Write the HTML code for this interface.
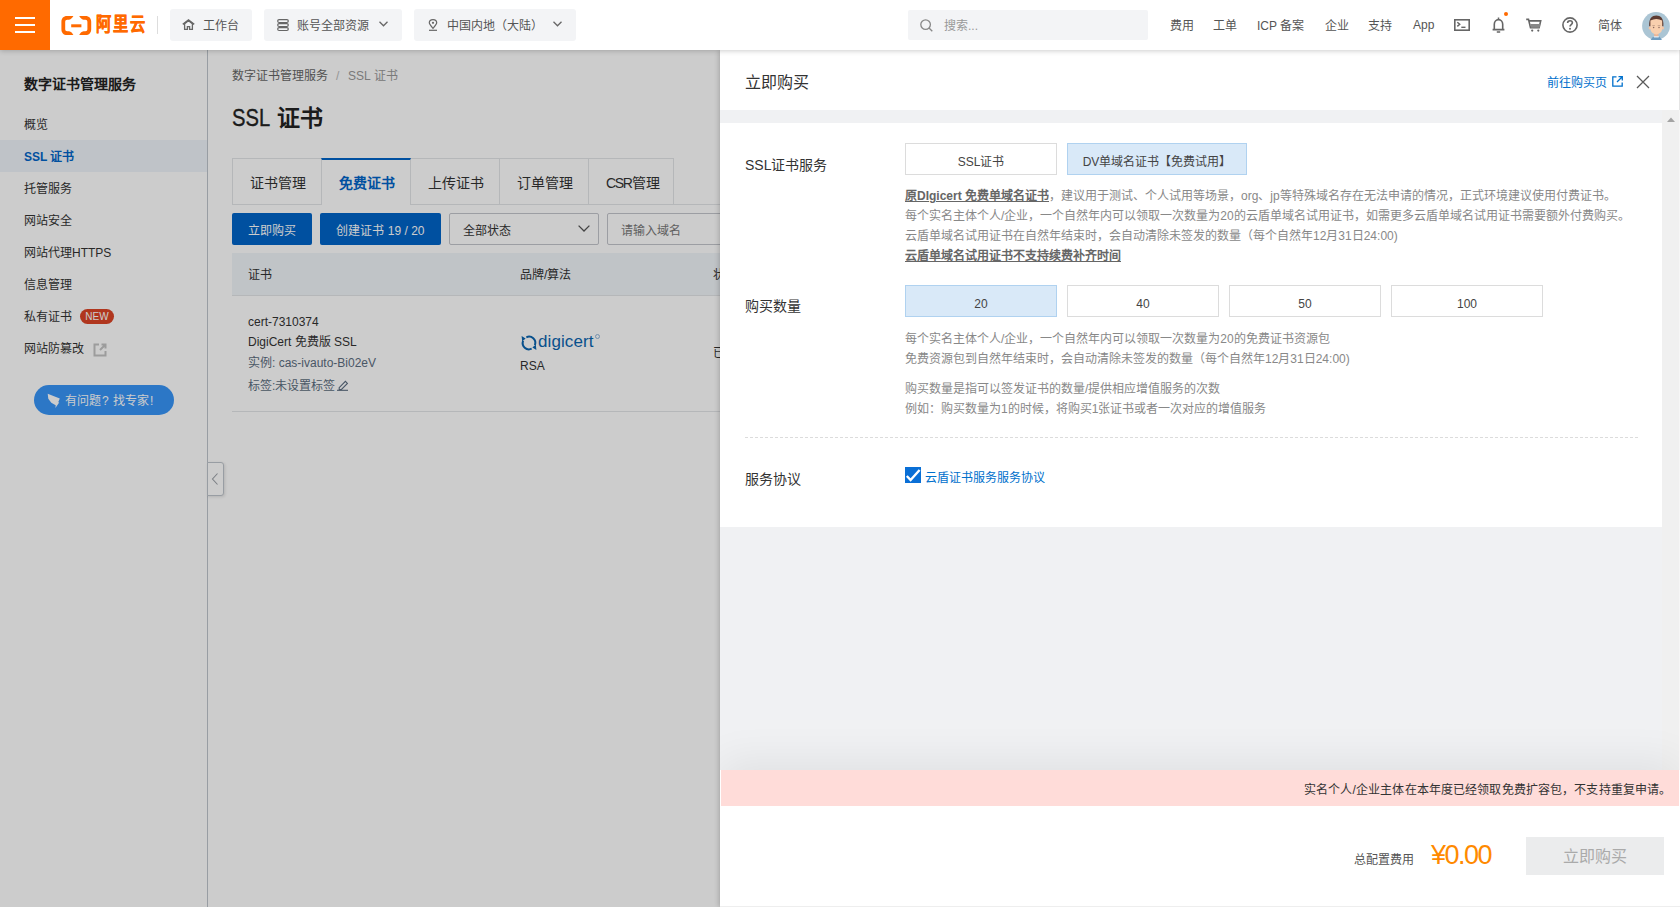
<!DOCTYPE html>
<html lang="zh-CN"><head><meta charset="utf-8">
<style>
*{box-sizing:border-box;margin:0;padding:0}
html,body{width:1680px;height:907px;overflow:hidden;background:#fff}
body{position:relative;font-family:"Liberation Sans",sans-serif;font-size:12px;color:#333}
.a{position:absolute;white-space:nowrap;line-height:14px}
svg{position:absolute;overflow:visible}
/* page under mask */
#side{position:absolute;z-index:0;left:0;top:50px;width:208px;height:857px;background:#fff;border-right:1px solid #bfc5cc}
#main{position:absolute;z-index:0;left:208px;top:50px;width:1472px;height:857px;background:#fff}
#mask{position:absolute;z-index:1;left:0;top:50px;width:1680px;height:857px;background:rgba(0,0,0,.2)}
.si{left:24px;color:#333}
.tab{top:108px;height:47px;border:1px solid #e3e5e8;background:#fff;font-size:14px;line-height:16px;padding:16px 0 0 17px;color:#333}
.tab.act{border-top:2px solid #0064c8;border-bottom:none;color:#0064c8;font-weight:bold;padding-top:15px;height:47px;z-index:1}
.btnp{top:163px;height:32px;border-radius:2px;background:#0064c8;color:#fff;text-align:center;line-height:30px;padding-top:3px}
.sel{top:163px;height:32px;border:1px solid #c4c6cc;border-radius:2px;background:#fff;line-height:26px;padding-top:4px;padding-left:13px;color:#333}
.lbl{left:25px;font-size:14px;line-height:16px;color:#333}
.opt{height:32px;border:1px solid #dcdcdc;background:#fff;text-align:center;line-height:24px;padding-top:6px;color:#444}
.opt.on{background:#d9e9f8;border-color:#b0d2f0}
.desc{left:185px;color:#888;line-height:14px}
.desc b{font-weight:bold;color:#666;text-decoration:underline}
/* nav */
#nav{position:absolute;left:0;top:0;width:1680px;height:50px;background:#fff;box-shadow:0 1px 5px rgba(0,0,0,.2);z-index:5}
.nbtn{position:absolute;top:9px;height:32px;background:#f3f4f6;border-radius:3px}
.nt{color:#555;top:19px}
/* drawer */
#drawer{position:absolute;left:720px;top:50px;width:960px;height:857px;background:#f0f1f3;z-index:3;overflow:hidden;box-shadow:-1px 0 5px rgba(0,0,0,.2)}
</style></head>
<body>
<!-- ================= SIDEBAR ================= -->
<div id="side">
  <div class="a" style="left:24px;top:26px;font-size:14px;font-weight:bold;color:#222;line-height:16px">数字证书管理服务</div>
  <div class="a si" style="top:68px">概览</div>
  <div class="a" style="left:0;top:90px;width:207px;height:32px;background:#eff4fa"></div>
  <div class="a si" style="top:100px;color:#0064c8;font-weight:bold">SSL 证书</div>
  <div class="a si" style="top:132px">托管服务</div>
  <div class="a si" style="top:164px">网站安全</div>
  <div class="a si" style="top:196px">网站代理HTTPS</div>
  <div class="a si" style="top:228px">信息管理</div>
  <div class="a si" style="top:260px">私有证书</div>
  <div class="a" style="left:80px;top:259px;width:34px;height:15px;border-radius:8px;background:#dc4426;color:#fff;font-size:10px;line-height:15px;text-align:center">NEW</div>
  <div class="a si" style="top:292px">网站防篡改</div>
  <svg style="left:93px;top:293px" width="14" height="14" viewBox="0 0 14 14"><path d="M6 1.5H1.5v11h11V8" fill="none" stroke="#c4c4c4" stroke-width="2"/><path d="M7 7l5.5-5.5M8.5 1.5h4v4" fill="none" stroke="#c4c4c4" stroke-width="2"/></svg>
  <div class="a" style="left:34px;top:335px;width:140px;height:30px;border-radius:15px;background:#3895f8"></div>
  <svg style="left:47px;top:343px" width="14" height="16" viewBox="0 0 14 16"><path d="M.7.7L12.8 5.4 11.2 9.3 12.2 9.6 8.4 15 8.7 12.2 4.3 9.8 1.3 5.8z" fill="#fff"/></svg>
  <div class="a" style="left:65px;top:344px;color:#fff">有问题<span style="display:inline-block;width:12px;padding-left:1px">?</span>找专家<span style="padding-left:1px">!</span></div>
</div>
<!-- ================= MAIN ================= -->
<div id="main">
  <div class="a" style="left:24px;top:19px;color:#666">数字证书管理服务</div>
  <div class="a" style="left:128px;top:19px;color:#bbb">/</div>
  <div class="a" style="left:140px;top:19px;color:#999">SSL 证书</div>
  <div class="a" style="left:24px;top:54px;font-size:23px;line-height:28px;font-weight:bold;color:#222"><span style="display:inline-block;transform:scaleX(.84);transform-origin:0 0;font-size:24px;font-weight:normal;-webkit-text-stroke:.35px #222;margin-right:-7px">SSL</span> 证书</div>
  <!-- tabs -->
  <div class="a" style="left:24px;top:154px;width:1300px;height:1px;background:#e3e5e8"></div>
  <div class="a tab" style="left:24px;width:90px">证书管理</div>
  <div class="a tab act" style="left:113px;width:90px">免费证书</div>
  <div class="a tab" style="left:202px;width:90px">上传证书</div>
  <div class="a tab" style="left:291px;width:90px">订单管理</div>
  <div class="a tab" style="left:380px;width:86px"><span style="letter-spacing:-1.4px">CSR</span><span style="margin-left:1px">管理</span></div>
  <!-- toolbar -->
  <div class="a btnp" style="left:24px;width:80px">立即购买</div>
  <div class="a btnp" style="left:112px;width:121px">创建证书 19 / 20</div>
  <div class="a sel" style="left:241px;width:150px">全部状态</div>
  <svg style="left:370px;top:175px" width="12" height="7" viewBox="0 0 12 7"><path d="M.6.6l5.4 5.4L11.4.6" fill="none" stroke="#555" stroke-width="1.3"/></svg>
  <div class="a sel" style="left:399px;width:300px;color:#777">请输入域名</div>
  <!-- table -->
  <div class="a" style="left:24px;top:203px;width:1300px;height:43px;background:#f1f5f9;border-bottom:1px solid #e3e5e8"></div>
  <div class="a" style="left:40px;top:218px">证书</div>
  <div class="a" style="left:312px;top:218px">品牌/算法</div>
  <div class="a" style="left:505px;top:218px">状态</div>
  <div class="a" style="left:40px;top:265px">cert-7310374</div>
  <div class="a" style="left:40px;top:285px">DigiCert 免费版 SSL</div>
  <div class="a" style="left:40px;top:306px;color:#5c6d80">实例: cas-ivauto-Bi02eV</div>
  <div class="a" style="left:40px;top:329px;color:#5c6d80">标签:未设置标签</div>
  <svg style="left:129px;top:328px" width="12" height="13" viewBox="0 0 12 13"><path d="M2.2 9.6L8.4 3.4l2 2-6.2 6.2H2.2z" fill="none" stroke="#5c6d80" stroke-width="1.1"/><path d="M0 12.3h11" stroke="#5c6d80" stroke-width="1.1"/></svg>
  <svg style="left:313px;top:285px" width="16" height="16" viewBox="0 0 16 16"><path d="M5.34 2.29A6.3 6.3 0 0 1 13.92 10.15M10.66 13.71A6.3 6.3 0 0 1 2.08 5.85" fill="none" stroke="#0a64b0" stroke-width="2"/><path d="M1.2 6.5L.6 1 4.6 3.6z M14.8 9.5l.6 5.5-4-2.6z" fill="#0a64b0"/></svg>
  <div class="a" style="left:330px;top:281px;font-size:17px;line-height:22px;color:#0a65b0;letter-spacing:.1px">digicert</div>
  <svg style="left:387px;top:284px" width="5" height="5" viewBox="0 0 5 5"><circle cx="2.5" cy="2.5" r="2" fill="none" stroke="#7aa6cf" stroke-width=".8"/></svg>
  <div class="a" style="left:312px;top:309px">RSA</div>
  <div class="a" style="left:505px;top:296px">已</div>
  <div class="a" style="left:24px;top:361px;width:1300px;height:1px;background:#e3e5e8"></div>
</div>
<div class="a" style="left:207px;top:462px;width:17px;height:34px;background:#fff;border:1px solid #bfc5cc;border-radius:0 3px 3px 0;box-shadow:1px 1px 3px rgba(0,0,0,.12)"></div>
<svg style="left:211px;top:472px" width="8" height="14" viewBox="0 0 8 14"><path d="M6.5 1.5L1.5 7l5 5.5" fill="none" stroke="#9ca1a8" stroke-width="1.1"/></svg>
<div id="mask"></div>

<!-- ================= NAV ================= -->
<div id="nav">
  <div class="a" style="left:0;top:0;width:50px;height:50px;background:#ff6a00"></div>
  <div class="a" style="left:15px;top:17px;width:20px;height:2px;background:#fff"></div>
  <div class="a" style="left:15px;top:24px;width:20px;height:2px;background:#fff"></div>
  <div class="a" style="left:15px;top:31px;width:20px;height:2px;background:#fff"></div>
  <svg style="left:61px;top:15.5px" width="31" height="19" viewBox="0 0 31 19"><path d="M12.4 0H6C2.5 0 .4 2.3.4 5.8v7.4C.4 16.7 2.5 19 6 19h6.4c-1-1.8-2.2-3.2-4.4-3.7H6.3c-1.4 0-2.1-.8-2.1-2.2V5.9c0-1.4.7-2.2 2.1-2.2H8C10.2 3.2 11.4 1.8 12.4 0z" fill="#ff6a00"/><path d="M18.2 0h6.4c3.5 0 5.6 2.3 5.6 5.8v7.4c0 3.5-2.1 5.8-5.6 5.8h-6.4c1-1.8 2.2-3.2 4.4-3.7h1.7c1.4 0 2.1-.8 2.1-2.2V5.9c0-1.4-.7-2.2-2.1-2.2h-1.7C20.4 3.2 19.2 1.8 18.2 0z" fill="#ff6a00"/><rect x="10.2" y="8.3" width="10.2" height="3" fill="#ff6a00"/></svg>
  <div class="a" style="left:96px;top:13px;font-size:19px;line-height:24px;font-weight:bold;color:#ff6a00;letter-spacing:2px;-webkit-text-stroke:.5px #ff6a00;transform:scaleX(.8);transform-origin:0 0">阿里云</div>
  <div class="a" style="left:157px;top:16px;width:1px;height:18px;background:#ddd"></div>

  <div class="nbtn" style="left:170px;width:82px"></div>
  <svg style="left:182px;top:19px" width="13" height="11" viewBox="0 0 13 11"><path d="M.8 5.4L6.5.9l5.7 4.5" fill="none" stroke="#666" stroke-width="1.5"/><path d="M2.6 4.6v5.8h2.8V7.6h2.2v2.8h2.8V4.6L6.5 1.8z" fill="none" stroke="#666" stroke-width="1.3"/></svg>
  <div class="a nt" style="left:203px">工作台</div>

  <div class="nbtn" style="left:264px;width:138px"></div>
  <svg style="left:277px;top:19px" width="12" height="12" viewBox="0 0 12 12"><rect x=".7" y=".6" width="10.6" height="2.9" rx="1.4" fill="none" stroke="#666" stroke-width="1.2"/><rect x=".7" y="4.6" width="10.6" height="2.9" rx="1.4" fill="none" stroke="#666" stroke-width="1.2"/><rect x=".7" y="8.6" width="10.6" height="2.9" rx="1.4" fill="none" stroke="#666" stroke-width="1.2"/></svg>
  <div class="a nt" style="left:297px">账号全部资源</div>
  <svg style="left:379px;top:21px" width="9" height="6" viewBox="0 0 9 6"><path d="M.5.8l4 4 4-4" fill="none" stroke="#666" stroke-width="1.3"/></svg>

  <div class="nbtn" style="left:414px;width:162px"></div>
  <svg style="left:428px;top:19px" width="10" height="12" viewBox="0 0 10 12"><path d="M5 9.3C2.5 6.5 1.3 5 1.3 3.8 1.3 1.8 3 .6 5 .6s3.7 1.2 3.7 3.2C8.7 5 7.5 6.5 5 9.3z" fill="none" stroke="#666" stroke-width="1.2"/><circle cx="5" cy="3.8" r="1.1" fill="#666"/><path d="M1 11.3h8" stroke="#666" stroke-width="1.2"/></svg>
  <div class="a nt" style="left:447px">中国内地（大陆）</div>
  <svg style="left:553px;top:21px" width="9" height="6" viewBox="0 0 9 6"><path d="M.5.8l4 4 4-4" fill="none" stroke="#666" stroke-width="1.3"/></svg>

  <div class="a" style="left:908px;top:10px;width:240px;height:30px;background:#f3f4f6;border-radius:2px"></div>
  <svg style="left:920px;top:19px" width="13" height="13" viewBox="0 0 13 13"><circle cx="5.6" cy="5.6" r="4.8" fill="none" stroke="#888" stroke-width="1.3"/><path d="M9 9l3.3 3.3" stroke="#888" stroke-width="1.3"/></svg>
  <div class="a nt" style="left:944px;color:#999">搜索...</div>

  <div class="a nt" style="left:1170px">费用</div>
  <div class="a nt" style="left:1213px">工单</div>
  <div class="a nt" style="left:1257px">ICP 备案</div>
  <div class="a nt" style="left:1325px">企业</div>
  <div class="a nt" style="left:1368px">支持</div>
  <div class="a nt" style="left:1413px;top:18px">App</div>
  <svg style="left:1454px;top:19px" width="16" height="12" viewBox="0 0 16 12"><rect x=".8" y=".8" width="14.4" height="10.4" fill="none" stroke="#666" stroke-width="1.6"/><path d="M3.3 3.2l2.4 2.1-2.4 2.1" fill="none" stroke="#666" stroke-width="1.5"/><path d="M7.3 8.3h4.2" stroke="#666" stroke-width="1.4"/></svg>
  <svg style="left:1492px;top:17px" width="13" height="16" viewBox="0 0 13 16"><path d="M2.3 12.2V7.3c0-2.7 1.8-4.7 4.2-4.7s4.2 2 4.2 4.7v4.9M.6 12.6h11.8" fill="none" stroke="#666" stroke-width="1.6"/><path d="M4.8 14.9h3.4M6.5 .6v1.8" stroke="#666" stroke-width="1.5"/></svg>
  <div class="a" style="left:1504px;top:12px;width:4px;height:4px;border-radius:2px;background:#ff6a00"></div>
  <svg style="left:1526px;top:18px" width="16" height="14" viewBox="0 0 16 14"><path d="M.2 1.4h2.3l2 8.3h8.6l1.6-6.8H3.4" fill="none" stroke="#666" stroke-width="1.6"/><path d="M4.2 5.9h10.2l-.9 3.9H5z" fill="#888"/><circle cx="6.2" cy="12.6" r="1.1" fill="#666"/><circle cx="12.3" cy="12.6" r="1.1" fill="#666"/></svg>
  <svg style="left:1562px;top:17px" width="16" height="16" viewBox="0 0 16 16"><circle cx="8" cy="8" r="7.1" fill="none" stroke="#666" stroke-width="1.6"/><path d="M5.6 6.1c0-1.5 1-2.4 2.4-2.4s2.4.9 2.4 2.1c0 1.7-2.4 1.8-2.4 3.6" fill="none" stroke="#666" stroke-width="1.6"/><circle cx="8" cy="11.8" r="1" fill="#666"/></svg>
  <div class="a nt" style="left:1598px">简体</div>
  <svg style="left:1642px;top:12px" width="28" height="28" viewBox="0 0 28 28"><circle cx="14" cy="14" r="13.9" fill="#abc5d4"/><path d="M8.6 28l2.6-3.6h6.2l2.6 3.6z" fill="#6e9dc2"/><path d="M12.2 20h4.2v4.6h-4.2z" fill="#eeb596"/><path d="M11.4 24.2h5.8l-.6 1.2h-4.6z" fill="#fff" opacity=".8"/><path d="M7.2 14.2C6.8 6.2 10 3.6 14.3 3.6s7.5 2.6 7.1 10.6z" fill="#5c3b32"/><ellipse cx="7.9" cy="16" rx="1.3" ry="1.5" fill="#f4c4a4"/><ellipse cx="20.7" cy="16" rx="1.3" ry="1.5" fill="#f4c4a4"/><path d="M8.4 8.6Q14.3 5.6 20.2 8.6L20.2 16.5Q20 21.8 14.3 22.4 8.6 21.8 8.4 16.5z" fill="#f8cfae"/><circle cx="11.6" cy="15.6" r=".75" fill="#8a6a5e"/><circle cx="17" cy="15.6" r=".75" fill="#8a6a5e"/><path d="M10.3 13.6h2.6M15.7 13.6h2.6" stroke="#9a7a6a" stroke-width=".5"/></svg>
</div>

<!-- ================= DRAWER ================= -->
<div id="drawer">
  <div class="a" style="left:0;top:0;width:960px;height:60px;background:#fff;border-right:1px solid #e5e5e5"></div>
  <div class="a" style="left:25px;top:24px;font-size:16px;line-height:18px;color:#333">立即购买</div>
  <div class="a" style="left:827px;top:26px;color:#0070cc">前往购买页</div>
  <svg style="left:892px;top:26px" width="11" height="11" viewBox="0 0 11 11"><path d="M4.5.8H.8v9.4h9.4V6.5" fill="none" stroke="#0070cc" stroke-width="1.3"/><path d="M5 6l5-5M6.5.7h3.8v3.8" fill="none" stroke="#0070cc" stroke-width="1.3"/></svg>
  <svg style="left:916px;top:24.5px" width="14" height="14" viewBox="0 0 14 14"><path d="M1 1l12 12M13 1L1 13" stroke="#5a5a5a" stroke-width="1.25"/></svg>
  <!-- scrollbar -->
  <div class="a" style="left:942px;top:60px;width:18px;height:660px;background:#f0f0f0"></div>
  <svg style="left:947px;top:67px" width="8" height="5" viewBox="0 0 8 5"><path d="M0 5L4 .5 8 5z" fill="#a3a3a3"/></svg>
  <!-- card -->
  <div class="a" style="left:0;top:73px;width:942px;height:404px;background:#fff"></div>
  <div class="a lbl" style="top:107px">SSL证书服务</div>
  <div class="a opt" style="left:185px;top:93px;width:152px">SSL证书</div>
  <div class="a opt on" style="left:347px;top:93px;width:180px">DV单域名证书【免费试用】</div>
  <div class="a desc" style="top:139px"><b>原DIgicert 免费单域名证书</b>，建议用于测试、个人试用等场景，org、jp等特殊域名存在无法申请的情况，正式环境建议使用付费证书。</div>
  <div class="a desc" style="top:159px">每个实名主体个人/企业，一个自然年内可以领取一次数量为20的云盾单域名试用证书，如需更多云盾单域名试用证书需要额外付费购买。</div>
  <div class="a desc" style="top:179px">云盾单域名试用证书在自然年结束时，会自动清除未签发的数量（每个自然年12月31日24:00)</div>
  <div class="a desc" style="top:199px"><b>云盾单域名试用证书不支持续费补齐时间</b></div>
  <div class="a lbl" style="top:248px">购买数量</div>
  <div class="a opt on" style="left:185px;top:235px;width:152px">20</div>
  <div class="a opt" style="left:347px;top:235px;width:152px">40</div>
  <div class="a opt" style="left:509px;top:235px;width:152px">50</div>
  <div class="a opt" style="left:671px;top:235px;width:152px">100</div>
  <div class="a desc" style="top:282px">每个实名主体个人/企业，一个自然年内可以领取一次数量为20的免费证书资源包</div>
  <div class="a desc" style="top:302px">免费资源包到自然年结束时，会自动清除未签发的数量（每个自然年12月31日24:00)</div>
  <div class="a desc" style="top:332px">购买数量是指可以签发证书的数量/提供相应增值服务的次数</div>
  <div class="a desc" style="top:352px">例如：购买数量为1的时候，将购买1张证书或者一次对应的增值服务</div>
  <div class="a" style="left:25px;top:387px;width:893px;height:0;border-top:1px dashed #dcdcdc"></div>
  <div class="a lbl" style="top:421px">服务协议</div>
  <svg style="left:185px;top:417px" width="16" height="16" viewBox="0 0 16 16"><rect width="16" height="16" fill="#0a6fd6"/><path d="M1.8 9l3.8 4 9-10" fill="none" stroke="#fff" stroke-width="2.4"/></svg>
  <div class="a" style="left:205px;top:421px;color:#0070cc">云盾证书服务服务协议</div>
  <!-- footer -->
  <div class="a" style="left:0;top:720px;width:960px;height:137px;background:#fff;box-shadow:0 -8px 40px rgba(0,0,0,.07)"></div>
  <div class="a" style="left:1px;top:720px;width:958px;height:36px;background:#ffdcd9"></div>
  <div class="a" style="left:959px;top:60px;width:1px;height:660px;background:#f6f6f6"></div>
  <div class="a" style="left:0;top:856px;width:960px;height:1px;background:#eee"></div>
  <div class="a" style="left:584px;top:733px;color:#333;letter-spacing:.13px">实名个人/企业主体在本年度已经领取免费扩容包，不支持重复申请。</div>
  <div class="a" style="left:634px;top:803px;color:#555">总配置费用</div>
  <div class="a" style="left:711px;top:790px;font-size:27px;line-height:30px;color:#ff8a00;letter-spacing:-1.5px">¥0.00</div>
  <div class="a" style="left:806px;top:787px;width:138px;height:38px;background:#ebeced;color:#aaa;font-size:16px;line-height:36px;padding-top:2px;text-align:center">立即购买</div>
</div>
</body></html>
